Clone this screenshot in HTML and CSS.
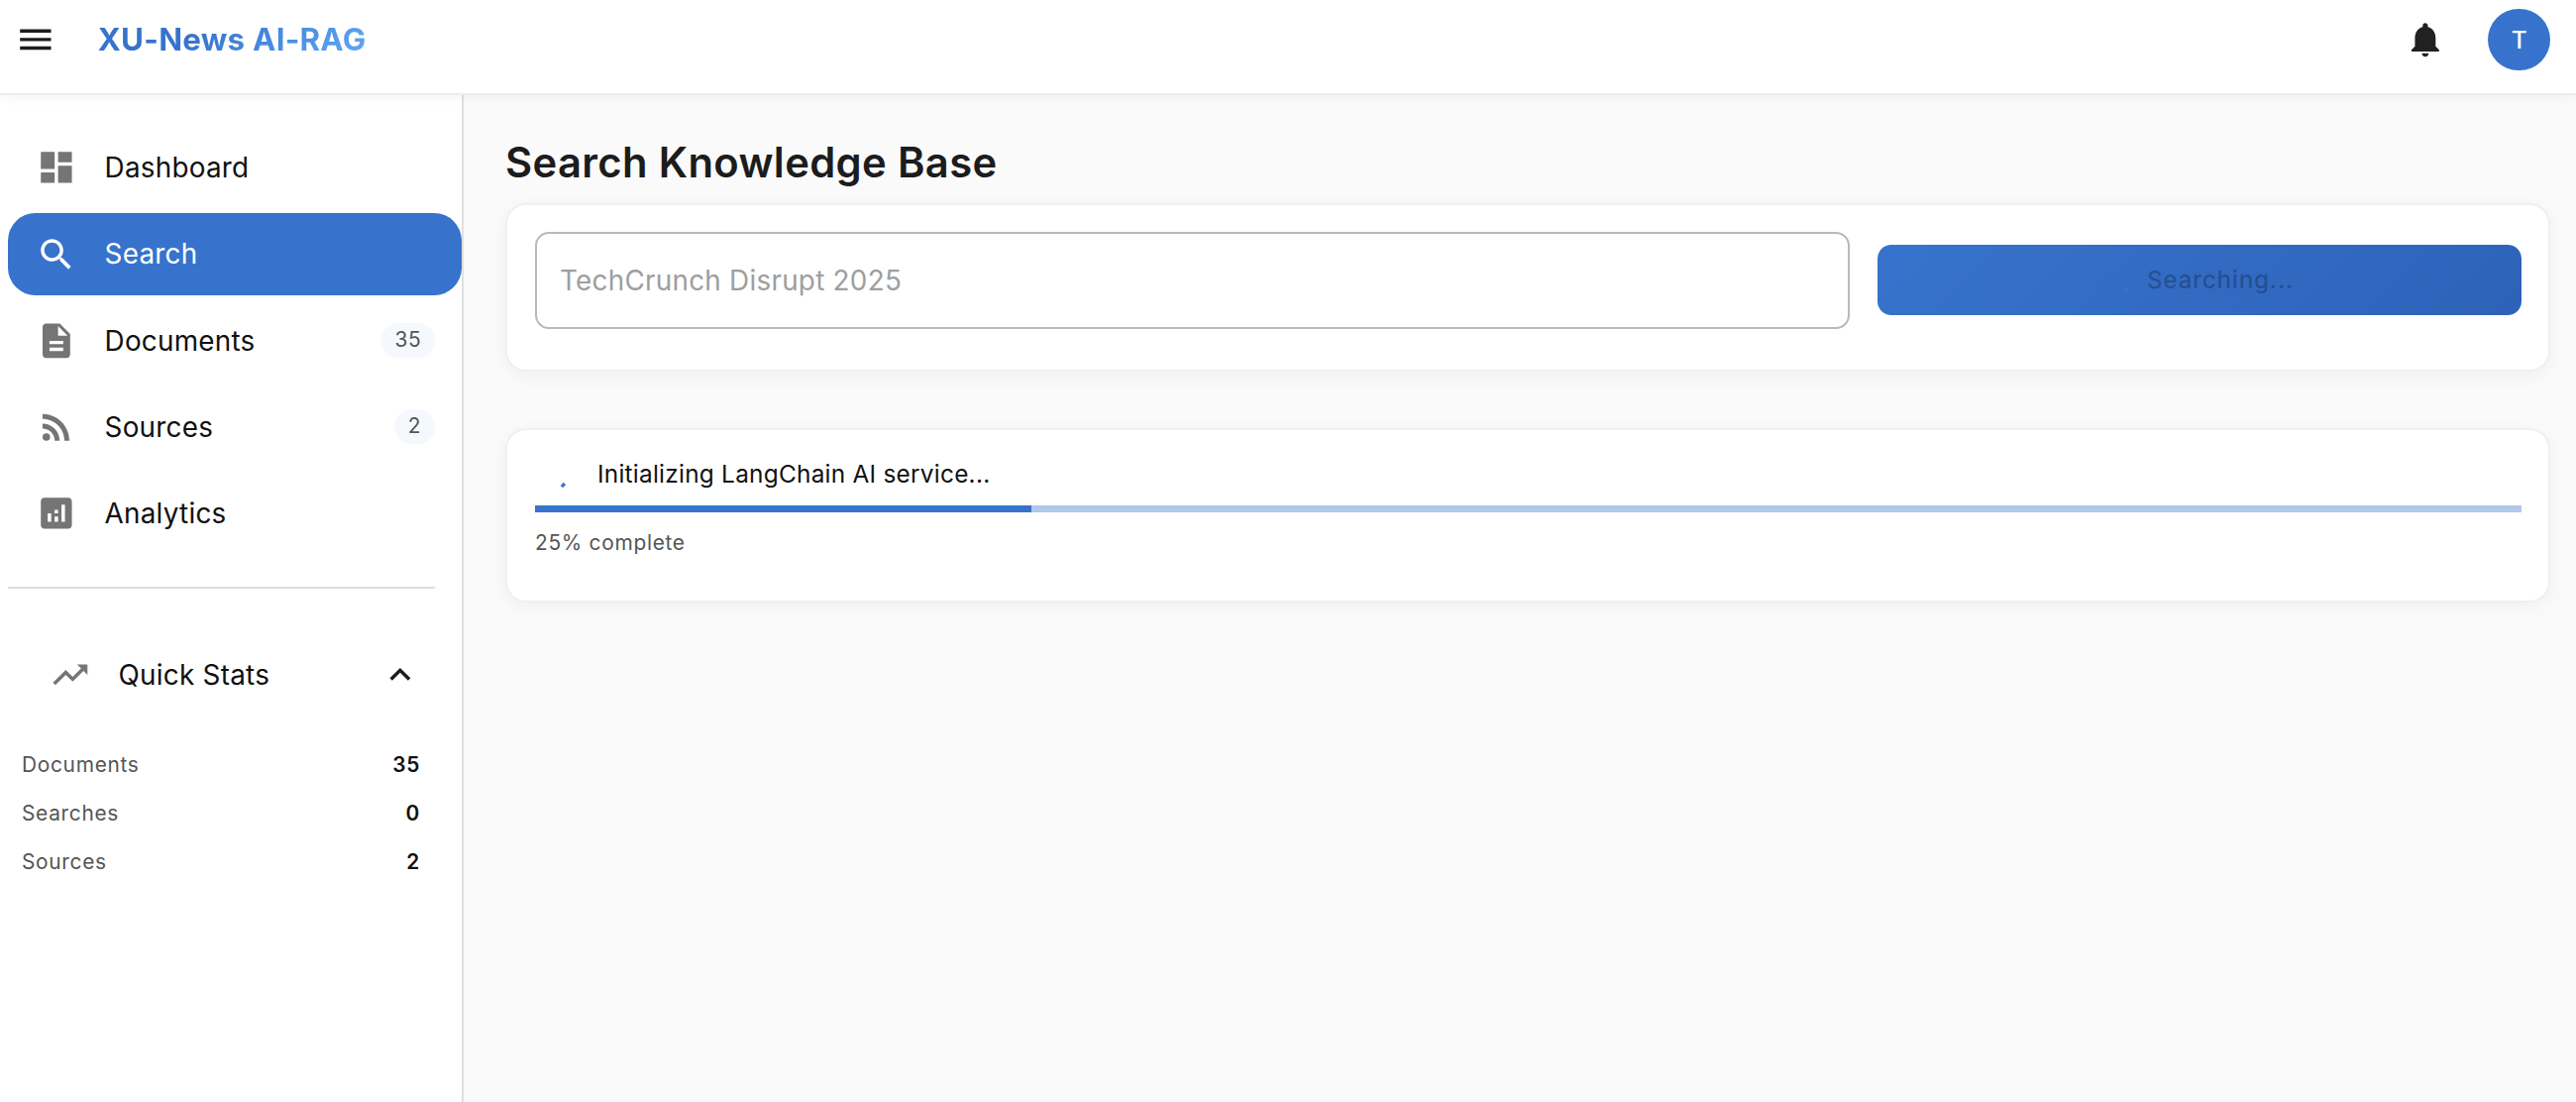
FILE: index.html
```html
<!DOCTYPE html>
<html lang="en">
<head>
<meta charset="utf-8">
<title>XU-News AI-RAG</title>
<link rel="stylesheet" href="styles.css">
</head>
<body>
<header class="topbar">
  <button class="icon-button" aria-label="Menu"><svg class="icon" viewBox="0 0 24 24"><path d="M3 18h18v-2H3v2zm0-5h18v-2H3v2zm0-7v2h18V6H3z"/></svg></button>
  <span class="brand">XU-News AI-RAG</span>
  <svg class="icon bell" viewBox="0 0 24 24"><path d="M12 22c1.1 0 2-.9 2-2h-4c0 1.1.89 2 2 2zm6-6v-5c0-3.07-1.64-5.64-4.5-6.32V4c0-.83-.67-1.5-1.5-1.5s-1.5.67-1.5 1.5v.68C7.63 5.36 6 7.92 6 11v5l-2 2v1h16v-1l-2-2z"/></svg>
  <span class="avatar">T</span>
</header>
<div class="shell">
  <aside class="sidebar">
    <nav class="nav">
      <a class="nav-item"><svg class="icon" viewBox="0 0 24 24"><path d="M3 13h8V3H3v10zm0 8h8v-6H3v6zm10 0h8V11h-8v10zm0-18v6h8V3h-8z"/></svg><span class="nav-label">Dashboard</span></a>
      <a class="nav-item active"><svg class="icon" viewBox="0 0 24 24"><path d="M15.5 14h-.79l-.28-.27C15.41 12.59 16 11.11 16 9.5 16 5.91 13.09 3 9.5 3S3 5.91 3 9.5 5.91 16 9.5 16c1.61 0 3.09-.59 4.23-1.57l.27.28v.79l5 4.99L20.49 19l-4.99-5zm-6 0C7.01 14 5 11.99 5 9.5S7.01 5 9.5 5 14 7.01 14 9.5 11.99 14 9.5 14z"/></svg><span class="nav-label">Search</span></a>
      <a class="nav-item"><svg class="icon" viewBox="0 0 24 24"><path d="M14 2H6c-1.1 0-1.99.9-1.99 2L4 20c0 1.1.89 2 1.99 2H18c1.1 0 2-.9 2-2V8l-6-6zm2 16H8v-2h8v2zm0-4H8v-2h8v2zm-3-5V3.5L18.5 9H13z"/></svg><span class="nav-label">Documents</span><span class="chip">35</span></a>
      <a class="nav-item"><svg class="icon" viewBox="0 0 24 24"><circle cx="6.18" cy="17.82" r="2.18"/><path d="M4 4.44v2.83c7.03 0 12.73 5.7 12.73 12.73h2.83c0-8.59-6.97-15.56-15.56-15.56zm0 5.66v2.83c3.9 0 7.07 3.17 7.07 7.07h2.83c0-5.47-4.43-9.9-9.9-9.9z"/></svg><span class="nav-label">Sources</span><span class="chip">2</span></a>
      <a class="nav-item"><svg class="icon" viewBox="0 0 24 24"><path d="M19 3H5c-1.1 0-2 .9-2 2v14c0 1.1.9 2 2 2h14c1.1 0 2-.9 2-2V5c0-1.1-.9-2-2-2zM9 17H7v-5h2v5zm4 0h-2v-3h2v3zm0-5h-2v-2h2v2zm4 5h-2V7h2v10z"/></svg><span class="nav-label">Analytics</span></a>
    </nav>
    <hr class="divider">
    <div class="stats-head"><svg class="icon" viewBox="0 0 24 24"><path d="m16 6 2.29 2.29-4.88 4.88-4-4L2 16.59 3.41 18l6-6 4 4 6.3-6.29L22 12V6z"/></svg><span class="nav-label">Quick Stats</span><svg class="icon chevron" viewBox="0 0 24 24"><path d="m12 8-6 6 1.41 1.41L12 10.83l4.59 4.58L18 14z"/></svg></div>
    <dl class="stats">
      <div class="stat"><dt>Documents</dt><dd>35</dd></div>
      <div class="stat"><dt>Searches</dt><dd>0</dd></div>
      <div class="stat"><dt>Sources</dt><dd>2</dd></div>
    </dl>
  </aside>
  <main class="content">
    <h1 class="page-title">Search Knowledge Base</h1>
    <section class="card search-card">
      <div class="field"><span class="field-text">TechCrunch Disrupt 2025</span></div>
      <button class="search-button" disabled><svg class="spinner" viewBox="0 0 28 28"><path d="M19 26l3-3"/></svg><span class="button-text">Searching...</span></button>
    </section>
    <section class="card progress-card">
      <div class="status"><svg class="spinner" viewBox="0 0 28 28"><path d="M5.8 27.2l3.2-3.2"/></svg><span class="status-text">Initializing LangChain AI service...</span></div>
      <div class="track"><div class="bar" style="width:25%"></div></div>
      <span class="percent">25% complete</span>
    </section>
  </main>
</div>
</body>
</html>
```
FILE: styles.css
```css
* { box-sizing: border-box; }
body {
  margin: 0;
  height: 1112px;
  overflow: hidden;
  display: flex;
  flex-direction: column;
  background: #fafafa;
  color: #1c1c1c;
  font-family: Inter, "Liberation Sans", sans-serif;
}
button { border: 0; padding: 0; background: none; font: inherit; color: inherit; }
.icon { width: 41.76px; height: 41.76px; flex: none; display: block; fill: currentColor; }

.topbar {
  position: relative;
  z-index: 1;
  flex: none;
  height: 96px;
  padding: 0 26px 14px 15px;
  display: flex;
  align-items: center;
  background: #fff;
  border-bottom: 2px solid #ededed;
  box-shadow: 0 2px 12px rgba(0, 0, 0, .05);
}
.brand {
  margin-left: 42px;
  font-size: 31.32px;
  line-height: 42px;
  font-weight: 700;
  letter-spacing: .24px;
  background: linear-gradient(135deg, #3773cc 0%, #3773cc 35%, #62a8f5 100%);
  background-clip: text;
  -webkit-background-clip: text;
  color: transparent;
}
.bell { margin-left: auto; margin-right: 42.3px; color: #212121; }
.avatar {
  width: 62.64px;
  height: 62.64px;
  border-radius: 50%;
  display: flex;
  align-items: center;
  justify-content: center;
  background: #3773cc;
  color: #fff;
  font-size: 24.36px;
  font-weight: 500;
}

.shell { flex: 1; display: flex; min-height: 0; }
.sidebar {
  width: 468px;
  flex: none;
  padding-top: 31.5px;
  background: #fff;
  border-right: 2px solid #dfdfdf;
}
.nav { display: flex; flex-direction: column; gap: 3.68px; padding-left: 8px; }
.nav-item {
  height: 83.5px;
  padding: 0 27px 0 28px;
  display: flex;
  align-items: center;
  border-radius: 27.84px;
}
.nav-item .icon { color: #757575; }
.nav-label { margin-left: 27.8px; font-size: 27.84px; line-height: 42px; letter-spacing: .26px; color: #111; }
.active { background: #3773cc; }
.nav-item.active .icon, .active .nav-label { color: #fff; }
.chip {
  height: 34.8px;
  margin-left: auto;
  padding: 0 14px;
  border-radius: 17.4px;
  background: #f5f9fe;
  color: #555;
  font-size: 20.88px;
  line-height: 34.8px;
  letter-spacing: .4px;
}
.divider { height: 2px; margin: 32px 27.5px 0 8px; border: 0; background: #dedede; }
.stats-head { height: 83.5px; margin: 45.8px 41.5px 0 50px; display: flex; align-items: center; }
.stats-head > .icon { color: #757575; }
.stats-head > .chevron { margin-left: auto; color: #1c1c1c; }
.stats { margin: 24.5px 42px 0 22px; }
.stat { height: 49px; display: flex; justify-content: space-between; align-items: center; font-size: 20.88px; letter-spacing: .7px; }
.stat dt { color: #555; }
.stat dd { margin: 0; font-weight: 600; color: #111; }

.content { flex: 1; padding: 43px 26px 0 42px; }
.page-title { margin: 0; height: 65.5px; font-size: 41.76px; line-height: 51px; font-weight: 600; letter-spacing: .35px; }
.card {
  background: #fff;
  border: 2px solid #f0f0f0;
  border-radius: 21px;
  box-shadow: 0 4px 20px rgba(0, 0, 0, .045);
}
.search-card { height: 170px; padding: 27px 27px 27px 28px; display: grid; grid-template-columns: 1327px 650px; gap: 28px; align-items: start; }
.field { height: 98px; padding: 0 23px; display: flex; align-items: center; border: 2px solid #b9b9b9; border-radius: 14px; }
.field-text { font-size: 27.84px; color: #9e9e9e; letter-spacing: .26px; }
.search-button {
  height: 70.5px;
  margin-top: 13.5px;
  border-radius: 14px;
  display: flex;
  align-items: center;
  justify-content: center;
  gap: 14px;
  background: linear-gradient(135deg, #3773cc, #2e62b9);
  color: rgba(0, 0, 0, .26);
  font-size: 24.36px;
  font-weight: 500;
  letter-spacing: .7px;
}
.spinner { width: 28px; height: 28px; flex: none; overflow: visible; fill: none; stroke: #3773cc; stroke-width: 3.2; }
.progress-card { height: 176px; margin-top: 57px; padding: 27px 27px 27px 28px; }
.status { display: flex; align-items: center; height: 35px; padding-left: 21px; }
.status-text { margin-left: 14px; font-size: 24.36px; letter-spacing: .26px; color: #111; }
.track { height: 7px; margin-top: 14px; background: #aec9ea; }
.bar { height: 100%; background: #3773cc; }
.percent { display: block; margin-top: 14px; font-size: 20.88px; line-height: 34px; letter-spacing: .7px; color: #555; }
```
